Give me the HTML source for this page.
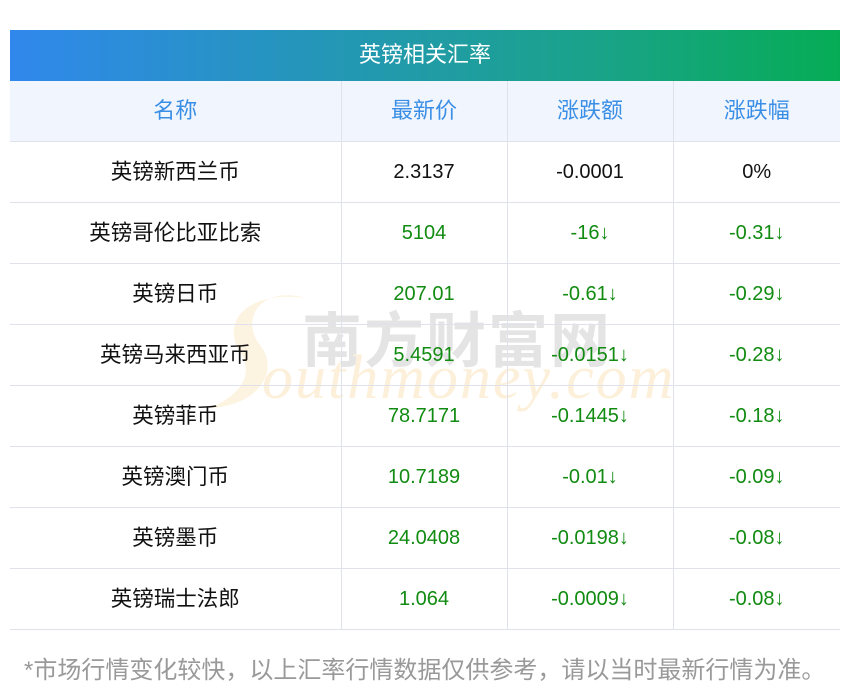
<!DOCTYPE html>
<html><head><meta charset="utf-8"><style>
body{margin:0;width:850px;height:697px;background:#fff;position:relative;overflow:hidden;font-family:"Liberation Sans","Noto Sans CJK SC",sans-serif;}
.title{position:absolute;left:10px;top:30px;width:830px;height:51px;background:linear-gradient(90deg,#3088ec,#1aa38a 70%,#06ac55);color:#fff;font-size:22px;line-height:49px;text-align:center;}
table{position:absolute;left:10px;top:81px;width:830px;border-collapse:collapse;table-layout:fixed;z-index:2}
td{height:60px;border:1px solid #dfe2ea;text-align:center;font-size:20px;color:#111;padding:0;line-height:24px}
td.c{font-size:21.5px}
td span{position:relative;top:0px}
tr td:first-child{border-left:none}
tr td:last-child{border-right:none}
tr:first-child td{border-top:none;background:#f1f6fe;color:#3a8ee6;font-size:22px}
.g{color:#118b11}
.wm{position:absolute;pointer-events:none;z-index:1}
.foot{position:absolute;left:24px;top:650px;font-size:24px;color:#999;white-space:nowrap}
</style></head><body>
<div class="title">英镑相关汇率</div>
<svg class="wm" style="left:200px;top:290px" width="120" height="125"><path d="M105 8 C60 -5 40 30 60 55 C80 80 60 115 10 118 C40 105 55 85 40 62 C20 30 50 0 105 8Z" fill="#fdf0da" opacity="0.8"/></svg>
<div class="wm" style="left:302px;top:293px;font-size:60px;color:#e4e4e4;letter-spacing:2px;font-weight:bold">南方财富网</div>
<div class="wm" style="left:262px;top:343px;font-size:62px;color:#fdf0da;font-family:'Liberation Serif',serif;font-style:italic;letter-spacing:2px">outhmoney.com</div>
<table>
<colgroup><col style="width:331px"><col style="width:166px"><col style="width:166px"><col style="width:167px"></colgroup>
<tr><td><span>名称</span></td><td><span>最新价</span></td><td><span>涨跌额</span></td><td><span>涨跌幅</span></td></tr>
<tr><td class="c"><span>英镑新西兰币</span></td><td>2.3137</td><td>-0.0001</td><td>0%</td></tr>
<tr><td class="c"><span>英镑哥伦比亚比索</span></td><td class="g">5104</td><td class="g">-16↓</td><td class="g">-0.31↓</td></tr>
<tr><td class="c"><span>英镑日币</span></td><td class="g">207.01</td><td class="g">-0.61↓</td><td class="g">-0.29↓</td></tr>
<tr><td class="c"><span>英镑马来西亚币</span></td><td class="g">5.4591</td><td class="g">-0.0151↓</td><td class="g">-0.28↓</td></tr>
<tr><td class="c"><span>英镑菲币</span></td><td class="g">78.7171</td><td class="g">-0.1445↓</td><td class="g">-0.18↓</td></tr>
<tr><td class="c"><span>英镑澳门币</span></td><td class="g">10.7189</td><td class="g">-0.01↓</td><td class="g">-0.09↓</td></tr>
<tr><td class="c"><span>英镑墨币</span></td><td class="g">24.0408</td><td class="g">-0.0198↓</td><td class="g">-0.08↓</td></tr>
<tr><td class="c"><span>英镑瑞士法郎</span></td><td class="g">1.064</td><td class="g">-0.0009↓</td><td class="g">-0.08↓</td></tr>
</table>
<div class="foot">*市场行情变化较快，以上汇率行情数据仅供参考，请以当时最新行情为准。</div>
</body></html>
